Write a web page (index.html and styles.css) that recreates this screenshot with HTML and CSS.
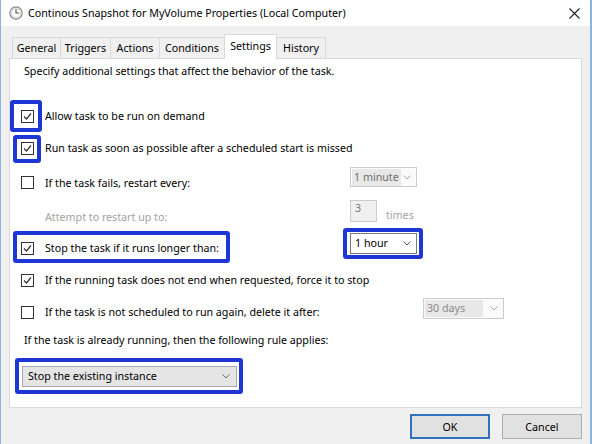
FILE: index.html
```html
<!DOCTYPE html>
<html lang="en">
<head>
<meta charset="utf-8">
<title>Continous Snapshot for MyVolume Properties</title>
<link rel="stylesheet" href="styles.css">
</head>
<body>
<div class="window">
  <div class="titlebar">
    <svg class="app-icon" width="14" height="14" viewBox="0 0 14 14">
      <circle cx="7" cy="7" r="6.2" fill="#ececec" stroke="#8a8a8a" stroke-width="1.2"/>
      <circle cx="7" cy="7" r="4.4" fill="#fafafa" stroke="#c8c8c8" stroke-width="0.6"/>
      <path d="M7 3.6 V7 H9.6" fill="none" stroke="#555" stroke-width="1.1" stroke-linecap="round"/>
    </svg>
    <span class="title">Continous Snapshot for MyVolume Properties (Local Computer)</span>
    <svg class="close" width="11" height="11" viewBox="0 0 11 11">
      <path d="M0.5 0.5 L10.5 10.5 M10.5 0.5 L0.5 10.5" stroke="#222" stroke-width="1.1"/>
    </svg>
  </div>

  <div class="client">
    <div class="tabs">
      <div class="tab tab-first w-general">General</div>
      <div class="tab w-triggers">Triggers</div>
      <div class="tab w-actions">Actions</div>
      <div class="tab tab-before-sel w-conditions">Conditions</div>
      <div class="tab tab-selected">Settings</div>
      <div class="tab w-history">History</div>
    </div>

    <div class="panel">
      <div class="intro">Specify additional settings that affect the behavior of the task.</div>

      <div class="row row-1">
        <div class="lbl">
          <span class="hl hl-1"><span class="cb"><svg viewBox="0 0 11 11" width="11" height="11"><polyline points="2,5.5 4.5,8 9,2.5" fill="none" stroke="#333" stroke-width="1.2"/></svg></span></span>
          <span>Allow task to be run on demand</span>
        </div>
      </div>

      <div class="row row-2">
        <div class="lbl">
          <span class="hl hl-2"><span class="cb"><svg viewBox="0 0 11 11" width="11" height="11"><polyline points="2,5.5 4.5,8 9,2.5" fill="none" stroke="#333" stroke-width="1.2"/></svg></span></span>
          <span>Run task as soon as possible after a scheduled start is missed</span>
        </div>
      </div>

      <div class="row row-3">
        <div class="lbl">
          <span class="cb"></span>
          <span>If the task fails, restart every:</span>
        </div>
        <div class="combo combo-disabled combo-minute">
          <span class="combo-text">1 minute</span>
          <svg class="chev" width="8" height="5" viewBox="0 0 8 5"><polyline points="0.5,0.5 4,4 7.5,0.5" fill="none" stroke="#a8a8a8" stroke-width="1"/></svg>
        </div>
      </div>

      <div class="row row-attempt">
        <div class="lbl lbl-indent">
          <span class="muted">Attempt to restart up to:</span>
        </div>
        <div class="spin-wrap">
          <span class="spin">3</span>
          <span class="muted">times</span>
        </div>
      </div>

      <div class="row row-4">
        <div class="lbl">
          <span class="hl hl-4">
            <span class="cb"><svg viewBox="0 0 11 11" width="11" height="11"><polyline points="2,5.5 4.5,8 9,2.5" fill="none" stroke="#333" stroke-width="1.2"/></svg></span>
            <span>Stop the task if it runs longer than:</span>
          </span>
        </div>
        <span class="hl hl-dd">
          <div class="combo combo-active">
            <span class="combo-text">1 hour</span>
            <svg class="chev" width="8" height="5" viewBox="0 0 8 5"><polyline points="0.5,0.5 4,4 7.5,0.5" fill="none" stroke="#555" stroke-width="1"/></svg>
          </div>
        </span>
      </div>

      <div class="row row-5">
        <div class="lbl lbl-wide">
          <span class="cb"><svg viewBox="0 0 11 11" width="11" height="11"><polyline points="2,5.5 4.5,8 9,2.5" fill="none" stroke="#333" stroke-width="1.2"/></svg></span>
          <span>If the running task does not end when requested, force it to stop</span>
        </div>
      </div>

      <div class="row row-6">
        <div class="lbl lbl-long">
          <span class="cb"></span>
          <span>If the task is not scheduled to run again, delete it after:</span>
        </div>
        <div class="combo combo-disabled combo-days">
          <span class="combo-text">30 days</span>
          <svg class="chev" width="8" height="5" viewBox="0 0 8 5"><polyline points="0.5,0.5 4,4 7.5,0.5" fill="none" stroke="#a8a8a8" stroke-width="1"/></svg>
        </div>
      </div>

      <div class="rule">If the task is already running, then the following rule applies:</div>

      <div class="select-row">
        <span class="hl hl-sel">
          <div class="combo combo-select">
            <span class="combo-text">Stop the existing instance</span>
            <svg class="chev" width="8" height="5" viewBox="0 0 8 5"><polyline points="0.5,0.5 4,4 7.5,0.5" fill="none" stroke="#666" stroke-width="1"/></svg>
          </div>
        </span>
      </div>
    </div>

    <div class="footer">
      <button class="btn btn-default">OK</button>
      <button class="btn">Cancel</button>
    </div>
  </div>
</div>
</body>
</html>
```

FILE: styles.css
```css
* { box-sizing: border-box; }

html, body {
  margin: 0;
  padding: 0;
}

body {
  width: 592px;
  height: 444px;
  overflow: hidden;
  font-family: "Noto Sans", "Open Sans", sans-serif;
  font-size: 10.7px;
  color: #000;
  background: #f0f0f0;
}

.window {
  width: 592px;
  height: 444px;
  display: flex;
  flex-direction: column;
  background: #f0f0f0;
  border-left: 1px solid #8ab4e4;
  border-right: 2px solid #8ab4e4;
}

/* ---------- title bar ---------- */
.titlebar {
  height: 26px;
  flex: none;
  background: #fff;
  display: flex;
  align-items: center;
  padding: 0 8px 0 8px;
}

.app-icon { flex: none; margin-right: 5px; }

.title {
  flex: 1;
  font-size: 10.7px;
  white-space: nowrap;
}

.close { flex: none; margin-right: 2px; }

/* ---------- client area ---------- */
.client {
  flex: 1;
  display: flex;
  flex-direction: column;
  padding: 8px 8px 0 8px;
}

.tabs {
  position: relative;
  z-index: 1;
  height: 25px;
  flex: none;
  display: flex;
  align-items: flex-end;
  padding-left: 3px;
  margin-bottom: -1px;
}

.tab {
  height: 21px;
  margin-bottom: 1px;
  display: flex;
  align-items: center;
  justify-content: center;
  padding-bottom: 1px;
  background: #f0f0f0;
  border-top: 1px solid #d9d9d9;
  border-right: 1px solid #d9d9d9;
  white-space: nowrap;
}

.tab-first { border-left: 1px solid #d9d9d9; }
.tab-before-sel { border-right: none; }

.w-general { width: 49px; }
.w-triggers { width: 50px; }
.w-actions { width: 49px; }
.w-conditions { width: 64px; }
.w-history { width: 49px; }

.tab-selected {
  width: 53px;
  height: 25px;
  margin-bottom: 0;
  padding-bottom: 3px;
  background: #fff;
  border-left: 1px solid #d9d9d9;
}

.panel {
  flex: none;
  height: 350px;
  background: #fff;
  border: 1px solid #d9d9d9;
  display: flex;
  flex-direction: column;
}

.intro {
  height: 24px;
  display: flex;
  align-items: center;
  padding-left: 14px;
}

.row {
  display: flex;
  align-items: center;
  padding-left: 11px;
}

.row-1 { height: 30px; margin-top: 18px; }
.row-2 { height: 34px; }
.row-3 { height: 35px; }
.row-attempt { height: 34px; }
.row-4 { height: 28px; }
.row-5 { height: 36px; }
.row-6 { height: 28px; }

.lbl {
  width: 329px;
  flex: none;
  display: flex;
  align-items: center;
  gap: 11px;
  white-space: nowrap;
}

.lbl-indent { padding-left: 24px; }
.lbl-wide { width: 500px; }
.lbl-long { width: 402px; }

.muted { color: #a3a3a3; }

/* ---------- checkbox ---------- */
.cb {
  width: 13px;
  height: 13px;
  flex: none;
  border: 1px solid #333;
  background: #fff;
  display: flex;
  align-items: center;
  justify-content: center;
}

.cb svg { display: block; }

/* ---------- annotation highlights ---------- */
.hl {
  position: relative;
  display: inline-flex;
  align-items: center;
  gap: 11px;
}

.hl::after {
  content: "";
  position: absolute;
  border: 4px solid #1d36d4;
  border-radius: 3px;
  pointer-events: none;
}

.hl-1::after { left: -11px; right: -8px; top: -10px; bottom: -9px; }
.hl-2::after { left: -8px; right: -7px; top: -7px; bottom: -8px; }
.hl-4::after { left: -8px; right: -11px; top: -10px; bottom: -8px; }
.hl-dd::after { left: -7px; right: -6px; top: -5px; bottom: -5px; }
.hl-sel::after { left: -7px; right: -6px; top: -8px; bottom: -7px; }

/* ---------- combos ---------- */
.combo {
  display: flex;
  align-items: center;
  justify-content: space-between;
  height: 21px;
  border: 1px solid #cccccc;
  background: #fbfbfb;
  padding: 0 5px 0 1px;
  white-space: nowrap;
}

.combo-text {
  padding: 0 2px;
  line-height: 17px;
}

.chev { flex: none; display: block; }

.combo-disabled .combo-text {
  background: #e8e8e8;
  color: #6e6e6e;
}

.combo-minute {
  width: 67px;
  height: 20px;
  margin-bottom: 11px;
}

.combo-days {
  width: 81px;
  margin-bottom: 7px;
}

.combo-days .combo-text { padding-right: 18px; color: #8a8a8a; }

.combo-active {
  width: 67px;
  background: #fff;
  border-color: #7a7a7a;
  padding-left: 2px;
}

.row-4 .hl-dd { margin-bottom: 9px; }

.spin-wrap {
  display: flex;
  align-items: flex-end;
  gap: 9px;
  margin-bottom: 12px;
}

.spin {
  width: 27px;
  height: 22px;
  border: 1px solid #cccccc;
  background: #f0f0f0;
  color: #777;
  padding: 1px 0 0 4px;
  line-height: 13px;
}

.spin-wrap .muted { margin-bottom: 0; line-height: 14px; }

.rule {
  height: 28px;
  display: flex;
  align-items: center;
  padding-left: 14px;
}

.select-row {
  padding: 12px 0 0 12px;
  display: flex;
}

.combo-select {
  width: 215px;
  background: #e5e5e5;
  border-color: #acacac;
  padding-left: 3px;
  padding-right: 6px;
}

/* ---------- footer ---------- */
.footer {
  flex: 1;
  display: flex;
  justify-content: flex-end;
  align-items: flex-start;
  gap: 12px;
  padding-top: 6px;
}

.btn {
  width: 80px;
  height: 25px;
  font-family: inherit;
  font-size: 10.7px;
  color: #000;
  background: #e1e1e1;
  border: 1px solid #adadad;
  padding: 0;
}

.btn-default {
  border: 2px solid #3170bd;
}
```
